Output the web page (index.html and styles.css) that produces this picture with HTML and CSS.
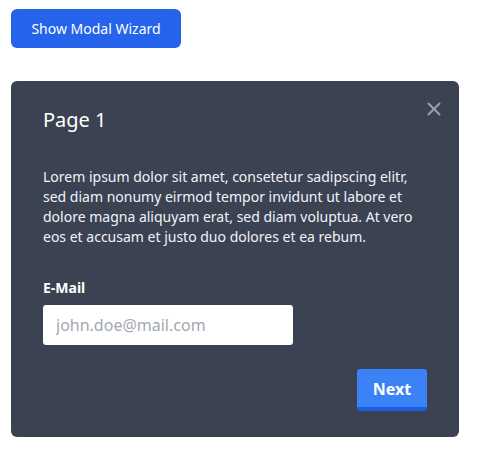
FILE: index.html
```html
<!DOCTYPE html>
<html>
<head>
<meta charset="utf-8">
<link rel="stylesheet" href="styles.css">
</head>
<body>
<div class="page">
  <button class="open-btn">Show Modal Wizard</button>
  <div class="modal">
    <div class="modal-head">
      <h2 class="title">Page 1</h2>
      <button class="close" aria-label="Close">
        <svg width="14" height="14" viewBox="0 0 14 14"><path d="M1.5 1.5 L12.5 12.5 M12.5 1.5 L1.5 12.5" stroke="#9aa1ad" stroke-width="2" stroke-linecap="round"/></svg>
      </button>
    </div>
    <p class="text">Lorem ipsum dolor sit amet, consetetur sadipscing elitr, sed diam nonumy eirmod tempor invidunt ut labore et dolore magna aliquyam erat, sed diam voluptua. At vero eos et accusam et justo duo dolores et ea rebum.</p>
    <label class="label" for="email">E-Mail</label>
    <input id="email" class="input" type="text" placeholder="john.doe@mail.com">
    <div class="actions">
      <button class="next">Next</button>
    </div>
  </div>
</div>
</body>
</html>
```
FILE: styles.css
```css
* { box-sizing: border-box; }
html, body { margin: 0; padding: 0; background: #fff; }
body { font-family: "Noto Sans", "Open Sans", sans-serif; }
.page { padding: 9px 11px; display: flex; flex-direction: column; align-items: flex-start; gap: 33px; }
.open-btn {
  width: 170px; height: 39px;
  background: #2563eb; color: #fff; border: none; border-radius: 6px;
  font-family: inherit; font-size: 14px; padding: 0;
}
.modal {
  width: 448px; height: 356px;
  background: #3b4252;
  border-radius: 6px;
  padding: 25px 32px 26px;
  display: flex; flex-direction: column;
}
.modal-head { display: flex; justify-content: space-between; align-items: flex-start; }
.title { margin: 0; font-size: 20px; line-height: 28px; font-weight: 400; color: #fff; }
.close { background: none; border: none; padding: 0; margin: -4px -14px 0 0; width: 14px; height: 14px; display: flex; }
.text { margin: 33px 0 0; font-size: 14px; line-height: 20px; color: #f1f3f6; }
.label { margin-top: 31px; font-size: 14px; line-height: 20px; font-weight: 700; color: #fff; }
.input {
  margin-top: 7px; width: 250px; height: 40px;
  border: none; border-radius: 3px; background: #fff;
  padding: 0 13px; font-family: inherit; font-size: 16px; color: #333;
}
.input::placeholder { color: #a3a8b1; }
.actions { margin-top: 24px; display: flex; justify-content: flex-end; }
.next {
  width: 70px; height: 42px;
  background: #3b82f6; color: #fff;
  border: none; border-bottom: 4px solid #1d5fe0; border-radius: 3px;
  font-family: inherit; font-size: 16px; font-weight: 700; padding: 1px 0 0;
}
```
